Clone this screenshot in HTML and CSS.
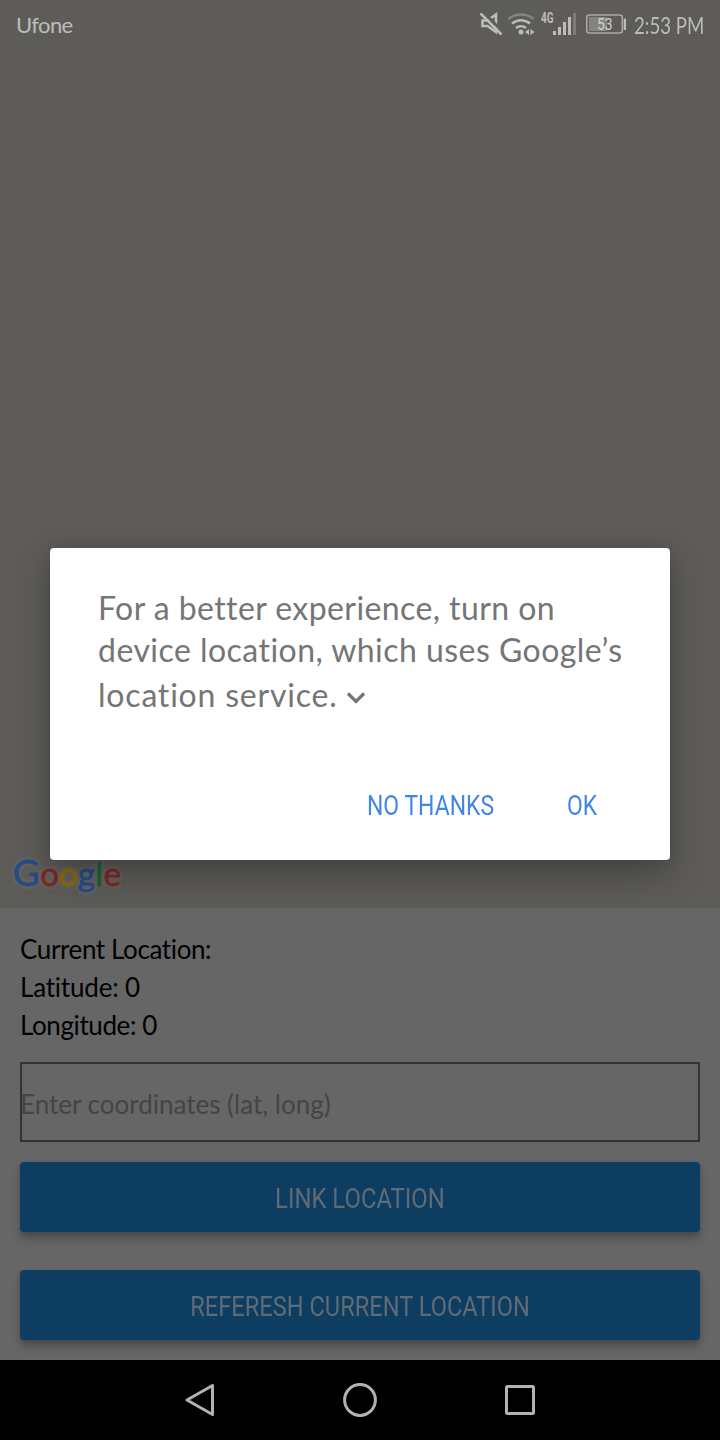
FILE: index.html
```html
<!DOCTYPE html>
<html lang="en">
<head>
<meta charset="utf-8">
<title>Link location</title>
<link rel="stylesheet" href="styles.css">
</head>
<body>
<div class="screen">
  <main class="map">
    <header class="status">
      <span class="carrier">Ufone</span>
      <div class="indicators">
        <svg class="status-icons" width="146" height="34" viewBox="480 8 146 34" fill="none" stroke="#bdbcba">
          <path d="M482.500 20.500h5l8.500-6v17.500l-8.500-6h-5z" stroke-width="2.500"/>
          <path d="M482.500 11.500l21 21" stroke="#5d5c58" stroke-width="3"/>
          <path d="M480.500 13.500l21 21" stroke-width="2.500"/>
          <path d="M508.500 19c7-6 18-6 25 0" stroke="#858480" stroke-width="2.400"/>
          <path d="M512 23.500c5.500-4.500 12.500-4.500 18 0M516 28c3-2.500 7-2.500 10 0" stroke-width="2.500"/>
          <circle cx="521" cy="32" r="2.500" fill="#bdbcba" stroke="none"/>
          <path d="M529 29v6l-4-3zM530.500 29v6l4-3z" fill="#bdbcba" stroke="none"/>
          <text class="net" x="541" y="23" textLength="12.500" lengthAdjust="spacingAndGlyphs">4G</text>
          <path d="M554.500 31v4M559.500 27v8M564.500 22v13M569.500 17v18" stroke-width="3"/>
          <path d="M574.500 13v22" stroke="#7d7c78" stroke-width="3"/>
          <rect x="589" y="17" width="18" height="14" fill="#858480" stroke="none"/>
          <rect x="586.800" y="15" width="35.500" height="18" rx="2.500" stroke="#aaa9a6" stroke-width="1.600"/>
          <path d="M625 18.500v11.500" stroke-width="2.600"/>
          <text class="charge" x="597" y="30" textLength="15.500" lengthAdjust="spacingAndGlyphs">53</text>
        </svg>
        <span class="clock">2:53 PM</span>
      </div>
    </header>
    <div class="google"><span class="b big">G</span><span class="r">o</span><span class="y">o</span><span class="b">g</span><span class="g">l</span><span class="r">e</span></div>
  </main>
  <section class="panel">
    <p class="line line-current">Current Location:</p>
    <p class="line line-lat">Latitude: 0</p>
    <p class="line line-long">Longitude: 0</p>
    <div class="field"><span class="hint">Enter coordinates (lat, long)</span></div>
    <div class="button"><span class="label label-link">LINK LOCATION</span></div>
    <div class="button"><span class="label label-refresh">REFERESH CURRENT LOCATION</span></div>
  </section>
  <nav class="nav">
    <svg width="40" height="40" viewBox="0 0 40 40"><path d="M32.500 5.500v29L7 20z"/></svg>
    <svg width="40" height="40" viewBox="0 0 40 40"><circle cx="20" cy="20" r="15.400"/></svg>
    <svg width="40" height="40" viewBox="0 0 40 40"><rect x="6.500" y="6.500" width="27" height="27" rx="1"/></svg>
  </nav>
  <div class="dialog">
    <p class="message">
      <span class="row row-one">For a better experience, turn on</span>
      <span class="row row-two">device location, which uses Google’s</span>
      <span class="row row-three"><span class="row-text">location service.</span><svg class="chevron" width="20" height="14" viewBox="0 0 20 14"><path d="M2 2.500l8 8 8-8"/></svg></span>
    </p>
    <div class="actions">
      <span class="action no">NO THANKS</span>
      <span class="action ok">OK</span>
    </div>
  </div>
</div>
</body>
</html>
```
FILE: styles.css
```css
* { box-sizing: border-box; }
body { margin: 0; background: #000; font-family: Lato, "Noto Sans", sans-serif; font-variant-ligatures: none; }
p { margin: 0; }
.screen { position: relative; width: 720px; height: 1440px; display: flex; flex-direction: column; overflow: hidden; white-space: nowrap; }
.map { height: 908px; background: #5d5c58; display: flex; flex-direction: column; justify-content: space-between; }
.status { height: 50px; padding: 0 16px; display: flex; justify-content: space-between; align-items: center; color: #bdbcba; font-size: 22px; }
.carrier { letter-spacing: -0.6px; padding-bottom: 1px; }
.indicators { display: flex; align-items: center; gap: 8px; }
.status-icons { display: block; }
.clock { width: 70px; line-height: 30px; padding-bottom: 1px; font-size: 23px; transform: scaleX(0.81); transform-origin: left; }
.net { font: 700 14px Roboto, sans-serif; fill: #bdbcba; stroke: none; }
.charge { font: 400 17px Roboto, sans-serif; fill: #d0d0ce; stroke: none; }
.google { padding-left: 13px; height: 60px; line-height: 48px; font-size: 33px; font-weight: 400; -webkit-text-stroke: 0.8px currentColor; letter-spacing: 0.2px; filter: drop-shadow(0 0 2px #686866) drop-shadow(0 0 2px #666664); }
.big { font-size: 37px; }
.b { color: #294c88; }
.r { color: #7e2a24; }
.y { color: #8b6b0c; }
.g { color: #1d6233; }
.panel { height: 452px; padding: 22px 20px 0; background: #666; overflow: hidden; }
.line { height: 38px; line-height: 38px; font-size: 26px; color: #000; letter-spacing: -0.38px; }
.line-lat { letter-spacing: -0.2px; }
.line-long { letter-spacing: -0.4px; }
.field { height: 80px; margin-top: 18px; border: 2px solid #333; display: flex; align-items: center; }
.hint { font-size: 26px; color: #444; line-height: 40px; padding-top: 4px; margin-left: -2px; }
.button { height: 70px; margin-top: 20px; border-radius: 4px; background: #0d3d61; color: #606c75; box-shadow: 0 7px 8px rgba(0, 0, 0, 0.22), 0 2px 5px rgba(0, 0, 0, 0.1); display: flex; align-items: center; justify-content: center; }
.button + .button { margin-top: 38px; }
.label { font: 400 27px/40px Roboto, sans-serif; padding-top: 4px; transform: scaleX(0.875); }
.label-link { transform: scaleX(0.885); }
.nav { height: 80px; background: #000; display: flex; align-items: center; justify-content: center; gap: 120px; }
.nav svg { fill: none; stroke: #b2b2b2; stroke-width: 3; stroke-linejoin: round; }
.dialog { position: absolute; left: 50px; top: 548px; width: 620px; height: 312px; padding: 38px 48px 0; background: #fff; border-radius: 4px; box-shadow: 0 16px 36px rgba(0, 0, 0, 0.25), 0 0 16px rgba(0, 0, 0, 0.12); }
.message { color: #757575; font-size: 32px; letter-spacing: 0.42px; }
.row { display: flex; height: 43px; line-height: 43px; }
.row-two { line-height: 42px; letter-spacing: 0.46px; }
.row-three { align-items: center; gap: 8px; height: 45px; letter-spacing: 0.8px; }
.chevron { fill: none; stroke: #757575; stroke-width: 3.2; margin-top: 6px; }
.actions { margin-top: 69px; height: 40px; display: flex; color: #4285e8; font: 400 27px/40px Roboto, sans-serif; padding-left: 269px; }
.action { transform: scaleX(0.85); transform-origin: left; }
.no { width: 200px; }
```
